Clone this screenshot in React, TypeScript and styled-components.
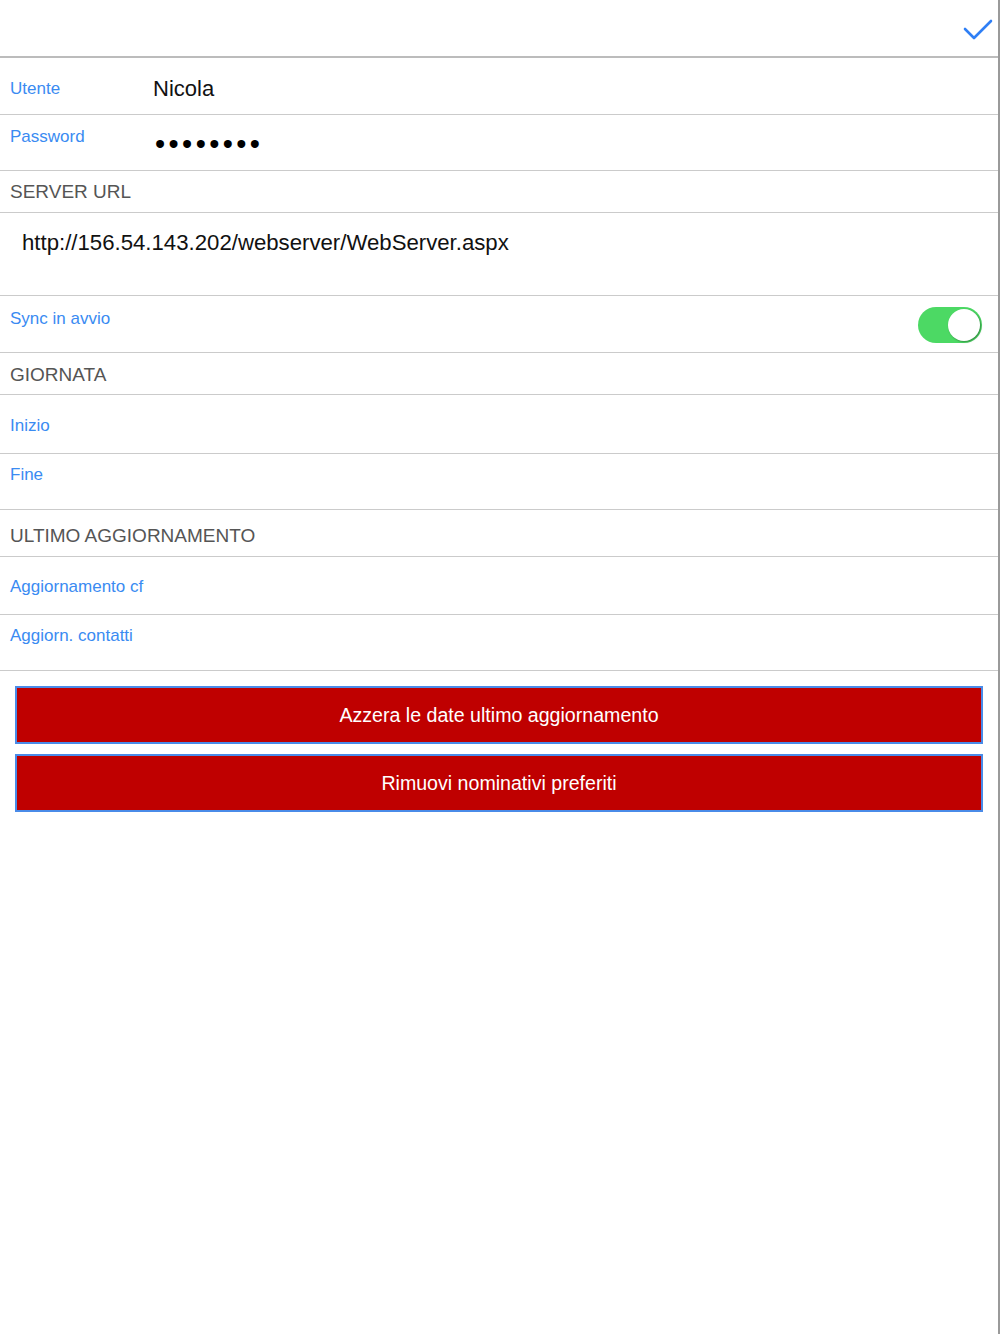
import React from "react";
import styled, { createGlobalStyle } from "styled-components";

const Global = createGlobalStyle`
  html, body { margin: 0; padding: 0; background: #fff; }
  body { font-family: "Liberation Sans", Arial, sans-serif; }
`;

const Screen = styled.div`
  width: 1000px;
  min-height: 1334px;
  box-sizing: border-box;
  border-right: 2px solid #9a9a9a;
  background: #fff;
  display: flex;
  flex-direction: column;
`;

const TopBar = styled.div`
  height: 58px;
  box-sizing: border-box;
  border-bottom: 2px solid #bcbcbc;
  display: flex;
  justify-content: flex-end;
  align-items: flex-start;
  padding: 18px 4px 0 0;
`;

const Row = styled.div<{ $h: number; $pad: number }>`
  height: ${(p) => p.$h}px;
  box-sizing: border-box;
  border-bottom: 1px solid #cbcbcb;
  padding-top: ${(p) => p.$pad}px;
  display: flex;
  align-items: flex-start;
  position: relative;
`;

const Label = styled.span<{ $w?: number }>`
  color: #3a8bf2;
  font-size: 17px;
  line-height: 20px;
  padding-left: 10px;
  width: ${(p) => (p.$w ? `${p.$w}px` : "auto")};
  flex-shrink: 0;
`;

const Value = styled.span`
  color: #111;
  font-size: 22px;
  line-height: 20px;
`;

const Dots = styled.span`
  color: #000;
  font-size: 29px;
  line-height: 20px;
  letter-spacing: 3.4px;
  margin-top: 7px;
  margin-left: 2px;
`;

const Header = styled.span`
  color: #555;
  font-size: 19px;
  line-height: 22px;
  padding-left: 10px;
`;

const UrlText = styled.span`
  color: #111;
  font-size: 22.2px;
  line-height: 24px;
  padding-left: 22px;
`;

const Toggle = styled.div<{ $on: boolean }>`
  position: absolute;
  right: 16px;
  top: 11px;
  width: 64px;
  height: 36px;
  border-radius: 18px;
  background: ${(p) => (p.$on ? "#4cd964" : "#e5e5e5")};
`;

const Knob = styled.div`
  position: absolute;
  right: 2px;
  top: 2px;
  width: 32px;
  height: 32px;
  border-radius: 50%;
  background: #fff;
  box-shadow: 1px 1px 2px rgba(0, 0, 0, 0.35);
`;

const Buttons = styled.div`
  display: flex;
  flex-direction: column;
  gap: 10px;
  padding: 15px 15px 0 15px;
`;

const RedButton = styled.button`
  width: 968px;
  height: 58px;
  box-sizing: border-box;
  background: #bf0000;
  border: 2px solid #4a8be8;
  color: #fff;
  font-family: "Liberation Sans", Arial, sans-serif;
  font-size: 19.6px;
  padding: 0;
  display: flex;
  align-items: center;
  justify-content: center;
  cursor: pointer;
`;

function Check() {
  return (
    <svg width="32" height="26" viewBox="0 0 32 26" fill="none">
      <polyline
        points="3,11 12,20 29,3"
        stroke="#2f7ff5"
        strokeWidth="2.6"
        strokeLinecap="round"
        strokeLinejoin="round"
      />
    </svg>
  );
}

export default function App() {
  return (
    <>
      <Global />
      <Screen>
        <TopBar>
          <Check />
        </TopBar>
        <Row $h={57} $pad={21}>
          <Label $w={143}>Utente</Label>
          <Value>Nicola</Value>
        </Row>
        <Row $h={56} $pad={12}>
          <Label $w={143}>Password</Label>
          <Dots>••••••••</Dots>
        </Row>
        <Row $h={42} $pad={10}>
          <Header>SERVER URL</Header>
        </Row>
        <Row $h={83} $pad={18}>
          <UrlText>http://156.54.143.202/webserver/WebServer.aspx</UrlText>
        </Row>
        <Row $h={57} $pad={13}>
          <Label>Sync in avvio</Label>
          <Toggle $on>
            <Knob />
          </Toggle>
        </Row>
        <Row $h={42} $pad={11}>
          <Header>GIORNATA</Header>
        </Row>
        <Row $h={59} $pad={21}>
          <Label>Inizio</Label>
        </Row>
        <Row $h={56} $pad={11}>
          <Label>Fine</Label>
        </Row>
        <Row $h={47} $pad={15}>
          <Header>ULTIMO AGGIORNAMENTO</Header>
        </Row>
        <Row $h={58} $pad={20}>
          <Label>Aggiornamento cf</Label>
        </Row>
        <Row $h={56} $pad={11}>
          <Label>Aggiorn. contatti</Label>
        </Row>
        <Buttons>
          <RedButton>Azzera le date ultimo aggiornamento</RedButton>
          <RedButton>Rimuovi nominativi preferiti</RedButton>
        </Buttons>
      </Screen>
    </>
  );
}
